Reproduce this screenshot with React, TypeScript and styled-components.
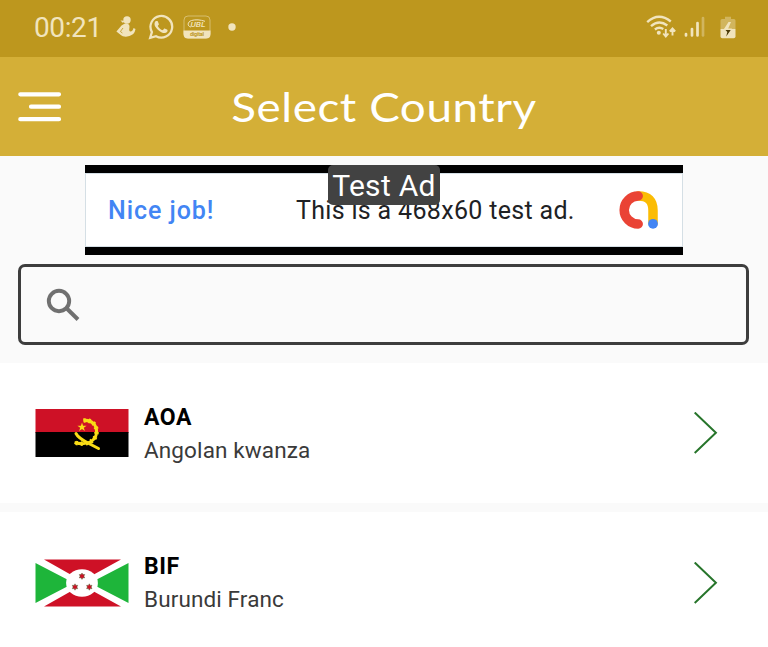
import React from 'react';
import styled, { createGlobalStyle } from 'styled-components';

const GlobalStyle = createGlobalStyle`
  * { box-sizing: border-box; }
  html, body { margin: 0; background: #fafafa; }
  body { font-family: Roboto, "Liberation Sans", sans-serif; overflow: hidden; }
  svg { display: block; flex: none; }
`;

const Screen = styled.div`
  width: 768px;
  height: 647px;
  overflow: hidden;
  display: flex;
  flex-direction: column;
  background: #fafafa;
`;

const StatusBar = styled.header`
  height: 57px;
  flex: none;
  padding: 0 32px 3px 34px;
  display: flex;
  align-items: center;
  justify-content: space-between;
  background: #bd971e;
  color: #f1e4bd;
`;

const StatusGroup = styled.div<{ $gap: number }>`
  display: flex;
  align-items: center;
  gap: ${({ $gap }) => $gap}px;
`;

const Clock = styled.span`
  width: 67px;
  margin-top: 2px;
  font-size: 28px;
  line-height: 32px;
  letter-spacing: -0.4px;
  white-space: nowrap;
`;

const AppBar = styled.nav`
  height: 99px;
  flex: none;
  padding: 0 18px;
  display: grid;
  grid-template-columns: 44px 1fr 44px;
  align-items: center;
  background: #d4af37;
`;

const MenuButton = styled.button`
  width: 44px;
  height: 32px;
  padding: 0;
  border: 0;
  background: none;
  display: flex;
`;

const Title = styled.h1`
  margin: 0;
  text-align: center;
  white-space: nowrap;
  color: #fff;
  font: 400 40px/48px Lato, sans-serif;
  letter-spacing: 0.5px;
  transform: scaleX(1.145);
`;

const AdBanner = styled.section`
  position: relative;
  width: 598px;
  height: 90px;
  flex: none;
  margin: 9px 0 0 85px;
  padding: 8px 0;
  background: #000;
`;

const AdBody = styled.div`
  height: 74px;
  padding: 0 22px;
  border: 1px solid #d5dfe5;
  display: flex;
  align-items: center;
  background: #fff;
`;

const AdHeadline = styled.span`
  width: 188px;
  margin-top: 2px;
  color: #4285f4;
  font-size: 25px;
  font-weight: 500;
  line-height: 32px;
  letter-spacing: 0.95px;
  white-space: nowrap;
`;

const AdText = styled.span`
  width: 323px;
  margin-top: 2px;
  color: #202124;
  font-size: 25px;
  line-height: 32px;
  letter-spacing: 0.32px;
  white-space: nowrap;
`;

const AdBadge = styled.span`
  position: absolute;
  left: 243px;
  top: 0;
  width: 112px;
  height: 40px;
  border-radius: 5px;
  background: #424242;
  color: #fff;
  text-align: center;
  font-size: 30px;
  line-height: 42px;
  letter-spacing: 0.3px;
  white-space: nowrap;
`;

const SearchBox = styled.label`
  width: 731px;
  height: 81px;
  flex: none;
  margin: 9px 0 18px 18px;
  padding: 0 0 2px 24px;
  border: 3px solid #3d3d3d;
  border-radius: 7px;
  display: flex;
  align-items: center;
`;

const SearchInput = styled.input`
  flex: 1;
  border: 0;
  outline: 0;
  background: none;
  font: 24px Roboto, sans-serif;
`;

const CountryList = styled.main`
  display: flex;
  flex-direction: column;
  gap: 9px;
`;

const CountryRow = styled.div`
  height: 140px;
  flex: none;
  padding: 0 50px 0 35px;
  display: flex;
  align-items: center;
  background: #fff;

  & + & {
    height: 141px;
  }
`;

const CountryText = styled.div`
  flex: 1;
  margin: 2px 0 0 15px;
`;

const Code = styled.div`
  color: #000;
  font-size: 23px;
  font-weight: 700;
  line-height: 32px;
  letter-spacing: 0.5px;
`;

const CurrencyName = styled.div`
  color: #3a3a3a;
  font-size: 22.5px;
  line-height: 33px;
  letter-spacing: 0.12px;
`;

const BatterySlot = styled.div`
  margin-left: 8px;
`;

const IconRow = styled.div`
  display: flex;
  align-items: center;
  gap: 12px;
  margin-left: 15px;
`;

const BankSlot = styled.div`
  margin-left: -3px;
`;

const DotSlot = styled.div`
  margin-left: 5px;
`;

function PersonIcon() {
  return (
    <svg width="20" height="22" viewBox="0 0 20 22" fill="currentColor">
      <circle cx="11" cy="4" r="3.7" />
      <path d="M4.500 4.500 8.500 4.800 7 7Z" />
      <path d="M8 8C10 7 13.500 7.500 13.500 10.500c0 2.500-1 3.500.5 5 2 .2 3.200-1.500 3.500-3.500L19.500 13c-.5 3.500-2 5.500-5 6.500-3 1.800-8 1.500-10-.8L.4 15.500 5.500 9.500Z" />
      <path d="m7 12-2.600 3.500 2 1.500" fill="none" stroke="#bd971e" strokeWidth=".8" />
    </svg>
  );
}

function WhatsAppIcon() {
  return (
    <svg width="26" height="26" viewBox="0 0 24 24" fill="currentColor">
      <path d="M17.472 14.382c-.297-.149-1.758-.867-2.030-.967-.273-.099-.471-.148-.670.150-.197.297-.767.966-.940 1.164-.173.199-.347.223-.644.075-.297-.150-1.255-.463-2.390-1.475-.883-.788-1.480-1.761-1.653-2.059-.173-.297-.018-.458.130-.606.134-.133.298-.347.446-.520.149-.174.198-.298.298-.497.099-.198.050-.371-.025-.520-.075-.149-.669-1.612-.916-2.207-.242-.579-.487-.500-.669-.510-.173-.008-.371-.010-.570-.010-.198 0-.520.074-.792.372-.272.297-1.040 1.016-1.040 2.479 0 1.462 1.065 2.875 1.213 3.074.149.198 2.096 3.200 5.077 4.487.709.306 1.262.489 1.694.625.712.227 1.360.195 1.871.118.571-.085 1.758-.719 2.006-1.413.248-.694.248-1.289.173-1.413-.074-.124-.272-.198-.570-.347Z" />
      <path d="M2 22 3.600 16.700A10 10 0 1 1 7.400 20.500Z" fill="none" stroke="currentColor" strokeWidth="2.100" />
    </svg>
  );
}

function BankIcon() {
  return (
    <svg width="28" height="24" viewBox="0 0 28 24">
      <rect x="1" y="1" width="26" height="22" rx="4" fill="none" stroke="currentColor" strokeOpacity=".5" />
      <path d="M.5 15.500h27V19c0 3-1.500 4.500-4.500 4.500H5C2 23.500.5 22 .5 19Z" fill="currentColor" />
      <path d="M8 12C4.200 11.500 4 7 8.500 5.500c4-1.200 9-.8 13.500.8" fill="none" stroke="currentColor" strokeWidth="1" />
      <text x="7.500" y="11.800" fill="currentColor" fontFamily="Roboto" fontSize="7" fontWeight="500" fontStyle="italic" textLength="15" lengthAdjust="spacingAndGlyphs">UBL</text>
      <text x="7" y="20.800" fill="#bd971e" fontFamily="Roboto" fontSize="5.500" fontWeight="700" textLength="14">digital</text>
    </svg>
  );
}

function NotificationDot() {
  return <svg width="8" height="8"><circle cx="4" cy="4" r="3.700" fill="currentColor" /></svg>;
}

function WifiIcon() {
  return (
    <svg width="31" height="24" viewBox="0 0 31 24" fill="none" stroke="currentColor">
      <path d="M1.200 7.200Q12.500-3.200 24.800 6.500M5 11.200Q13 4 21.300 10.500M8.900 14.500Q13 11.200 17.300 14" strokeWidth="2.400" />
      <circle cx="12.800" cy="17.800" r="2" fill="currentColor" stroke="none" />
      <path d="M19.800 14v7M17.200 18.500l2.600 3 2.600-3M26.500 20.500v-7M23.800 16.500l2.700-3 2.700 3" strokeWidth="1.900" />
    </svg>
  );
}

function SignalIcon() {
  return (
    <svg width="21" height="22" viewBox="0 0 21 22" stroke="currentColor" strokeWidth="2.700" strokeLinecap="round">
      <path d="M2 18v1.500M8 13v6.500M13.500 7v12.500" />
      <path d="M19 2v17.500" strokeOpacity=".4" />
    </svg>
  );
}

function BatteryIcon() {
  return (
    <svg width="16" height="23" viewBox="0 0 16 23">
      <path d="M5 3V.7h6V3h3q1.500 0 1.500 1.500V13H.5V4.500Q.5 3 2 3Z" fill="currentColor" opacity=".4" />
      <path d="M.5 13h15v7.500q0 1.800-1.800 1.800H2.300Q.5 22.300.5 20.500Z" fill="currentColor" />
      <path d="m8.500 6-5 7.700h4L6 20.500l6-8H8.200L11 6Z" fill="currentColor" />
      <path d="M5.500 14h5.200L6.200 20.500 7.300 16Z" fill="#4b3a08" />
    </svg>
  );
}

function MenuIcon() {
  return (
    <svg width="44" height="32" viewBox="0 0 44 32" stroke="#fff" strokeWidth="4.200" strokeLinecap="round">
      <path d="M2.300 3.300H41M13 15.700H41M2.300 28.200H41" />
    </svg>
  );
}

function AdMobLogo() {
  return (
    <svg width="40" height="38" viewBox="0 0 40 38" fill="none" strokeLinecap="round" strokeWidth="9.500">
      <path d="M19.500 5Q34 5 34 19.500V32" stroke="#fbbc04" />
      <path d="M19.200 5a14 14 0 0 0 0 28" stroke="#ea4335" />
      <circle cx="34" cy="32.800" r="4.900" fill="#4285f4" />
    </svg>
  );
}

function SearchIcon() {
  return (
    <svg width="36" height="34" viewBox="0 0 36 34" fill="none" stroke="#707070">
      <circle cx="14" cy="14" r="10.200" strokeWidth="3.900" />
      <path d="m21.800 21.500 11.200 11" strokeWidth="4" />
    </svg>
  );
}

function Chevron() {
  return (
    <svg width="24" height="42" viewBox="0 0 24 42" fill="none" stroke="#27752b" strokeWidth="2">
      <path d="m.7.5 21.200 20.300L.7 41" />
    </svg>
  );
}

function AngolaFlag() {
  return (
    <svg width="94" height="48" viewBox="0 0 94 48">
      <path d="M.5 0h93v24H.5Z" fill="#ce1126" />
      <path d="M.5 23h93v25H.5Z" fill="#000" />
      <g fill="none" stroke="#f9dc16">
        <path d="M48.500 11.500C57 10.500 62 16 61.500 23.500C61 32 52 37 39.500 33.500" strokeWidth="3" />
        <path d="M48.500 11.500C57 10.500 62 16 61.500 23.500C61 32 52 37 39.500 33.500" strokeWidth="4.500" strokeDasharray="2 3" />
        <path d="M41 24.500c2 4 5.500 6 11 9l11.500 6" strokeWidth="3" strokeLinecap="round" />
      </g>
      <path d="m47 13.500 1.100 3.200h3.500L48.800 18.800l1.100 3.300-2.900-2-2.900 2 1.100-3.300-2.800-2.100h3.500Z" fill="#f9dc16" />
    </svg>
  );
}

function BurundiFlag() {
  const stars = [[47, 17.200], [40, 28], [54.300, 28]];
  return (
    <svg width="94" height="48" viewBox="0 0 94 48">
      <path d="M.5.500h93v47H.5Z" fill="#fff" />
      <path d="M9 .5h77L47 22ZM9 47.500h77L47 26Z" fill="#ce1126" />
      <path d="M.5 4v40L39 24ZM93.500 4v40L55 24Z" fill="#1eb53a" />
      <ellipse cx="47" cy="24" rx="15.900" ry="13.700" fill="#fff" />
      {stars.map(([x, y]) => (
        <path key={x} transform={`translate(${x} ${y})`} d="m0-3.200.9 1.600 1.800-.1L1.900 0l.8 1.700-1.800-.1L0 3.200-.9 1.600l-1.800.1.800-1.700-.8-1.700 1.800.1Z" fill="#ce1126" stroke="#45602f" strokeWidth=".45" />
      ))}
    </svg>
  );
}

const countries = [
  { code: 'AOA', name: 'Angolan kwanza', Flag: AngolaFlag },
  { code: 'BIF', name: 'Burundi Franc', Flag: BurundiFlag },
];

function StatusIcons() {
  return (
    <IconRow>
      <PersonIcon />
      <WhatsAppIcon />
      <BankSlot><BankIcon /></BankSlot>
      <DotSlot><NotificationDot /></DotSlot>
    </IconRow>
  );
}

export default function App() {
  return (
    <Screen>
      <GlobalStyle />
      <StatusBar>
        <StatusGroup $gap={0}>
          <Clock>00:21</Clock>
          <StatusIcons />
        </StatusGroup>
        <StatusGroup $gap={7}>
          <WifiIcon />
          <SignalIcon />
          <BatterySlot><BatteryIcon /></BatterySlot>
        </StatusGroup>
      </StatusBar>
      <AppBar>
        <MenuButton aria-label="Menu"><MenuIcon /></MenuButton>
        <Title>Select Country</Title>
      </AppBar>
      <AdBanner>
        <AdBody>
          <AdHeadline>Nice job!</AdHeadline>
          <AdText>This is a 468x60 test ad.</AdText>
          <AdMobLogo />
        </AdBody>
        <AdBadge>Test Ad</AdBadge>
      </AdBanner>
      <SearchBox>
        <SearchIcon />
        <SearchInput aria-label="Search" />
      </SearchBox>
      <CountryList>
        {countries.map(({ code, name, Flag }) => (
          <CountryRow key={code}>
            <Flag />
            <CountryText>
              <Code>{code}</Code>
              <CurrencyName>{name}</CurrencyName>
            </CountryText>
            <Chevron />
          </CountryRow>
        ))}
      </CountryList>
    </Screen>
  );
}
